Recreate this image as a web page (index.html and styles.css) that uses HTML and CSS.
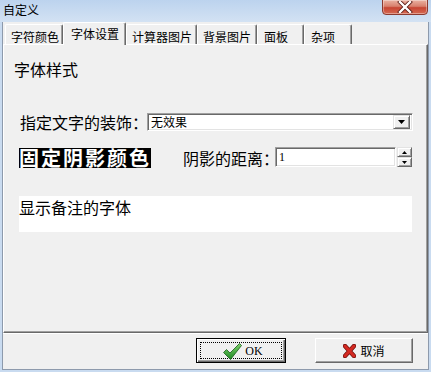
FILE: index.html
```html
<!DOCTYPE html>
<html>
<head>
<meta charset="utf-8">
<link rel="stylesheet" href="styles.css">
</head>
<body>
<div class="window">
  <div class="titlebar">
    <span class="title">自定义</span>
    <div class="close">
      <svg width="16" height="12" viewBox="0 0 16 12">
        <path d="M3 1 L13 11 M13 1 L3 11" stroke="#5a1a14" stroke-width="4" stroke-linecap="square"/>
        <path d="M3 1 L13 11 M13 1 L3 11" stroke="#ffffff" stroke-width="2.4" stroke-linecap="square"/>
      </svg>
    </div>
  </div>
  <div class="client">
    <div class="tabs">
      <div class="tab w1">字符颜色</div>
      <div class="tab active w2">字体设置</div>
      <div class="tab w3">计算器图片</div>
      <div class="tab w4">背景图片</div>
      <div class="tab w5">面板</div>
      <div class="tab w6">杂项</div>
    </div>
    <div class="panel">
      <div class="group-title">字体样式</div>
      <div class="row row1">
        <span class="label deco">指定文字的装饰：</span>
        <div class="select">
          <span class="select-text">无效果</span>
          <span class="drop">
            <svg width="7" height="4" viewBox="0 0 7 4"><path d="M0 0 H7 L3.5 4 Z" fill="#000"/></svg>
          </span>
        </div>
      </div>
      <div class="row row2">
        <span class="shadow-label">固定阴影颜色</span>
        <span class="label dist">阴影的距离：</span>
        <div class="spin">
          <div class="spin-input">1</div>
          <div class="spin-btns">
            <div class="spin-btn"><svg width="5" height="3" viewBox="0 0 5 3"><path d="M0 3 H5 L2.5 0 Z" fill="#000"/></svg></div>
            <div class="spin-btn"><svg width="5" height="3" viewBox="0 0 5 3"><path d="M0 0 H5 L2.5 3 Z" fill="#000"/></svg></div>
          </div>
        </div>
      </div>
      <div class="memo">显示备注的字体</div>
    </div>
    <div class="buttons">
      <div class="btn ok">
        <div class="focus">
          <svg class="icon-check" width="19" height="17" viewBox="0 0 19 17">
            <defs>
              <linearGradient id="g" x1="0" y1="0" x2="0" y2="1">
                <stop offset="0" stop-color="#7ed36a"/>
                <stop offset="1" stop-color="#1f8a25"/>
              </linearGradient>
            </defs>
            <path d="M0.5 9.5 L3.5 6.5 L7 10 L16.5 0.5 L18.5 2.5 L7.5 16.5 Z" fill="url(#g)" stroke="#1a5e1c" stroke-width="0.8"/>
          </svg>
          <span class="ok-text">OK</span>
        </div>
      </div>
      <div class="btn cancel">
        <svg class="icon-x" width="13" height="14" viewBox="0 0 13 14">
          <path d="M2 2 L11 12 M11 2 L2 12" stroke="#6e0f0c" stroke-width="4.4" stroke-linecap="round"/>
          <path d="M2 2 L11 12 M11 2 L2 12" stroke="#d42a22" stroke-width="3" stroke-linecap="round"/>
        </svg>
        <span class="cancel-text">取消</span>
      </div>
    </div>
  </div>
</div>
</body>
</html>
```

FILE: styles.css
```css
* { box-sizing: border-box; }
html, body { margin: 0; padding: 0; }
body {
  width: 431px;
  height: 372px;
  overflow: hidden;
  font-family: "Noto Sans CJK SC", "Noto Sans", sans-serif;
  color: #000;
}
.window {
  width: 431px;
  height: 372px;
  background: #c9dbf0;
  display: flex;
  flex-direction: column;
}
.titlebar {
  height: 22px;
  flex: none;
  background: linear-gradient(#bcd3ee, #d3e2f3);
  display: flex;
  justify-content: space-between;
  align-items: flex-start;
  padding-left: 3px;
  padding-right: 3px;
}
.title {
  font-size: 12px;
  line-height: 14px;
  margin-top: 3px;
  color: #000;
}
.close {
  width: 46px;
  height: 16px;
  margin-top: -1px;
  border: 1px solid #8b3a30;
  border-radius: 0 0 4px 4px;
  background: linear-gradient(#eab2a2 0%, #d8806d 45%, #c74533 55%, #d56a52 100%);
  display: flex;
  align-items: center;
  justify-content: center;
  box-shadow: inset 0 0 0 1px rgba(255,255,255,0.35);
}
.client {
  flex: 1;
  margin: 0 2px 2px 2px;
  border: 1px solid #8d9aac;
  border-top: none;
  background: #f0f0f0;
  display: flex;
  flex-direction: column;
}
.tabs {
  height: 22px;
  flex: none;
  display: flex;
  align-items: flex-end;
  padding-left: 2px;
  position: relative;
  z-index: 2;
}
.tab {
  height: 20px;
  background: #f0f0f0;
  border-top: 1px solid #fff;
  border-left: 1px solid #fff;
  border-right: 1px solid #696969;
  box-shadow: inset -1px 0 0 #a0a0a0;
  border-radius: 2px 2px 0 0;
  font-size: 12px;
  line-height: 14px;
  padding-top: 5px;
  padding-left: 5px;
  white-space: nowrap;
}
.tab.active {
  height: 23px;
  margin-bottom: -1px;
  padding-top: 4px;
  padding-left: 7px;
}
.w1 { width: 58px; }
.w2 { width: 63px; }
.w3 { width: 71px; }
.w4 { width: 60px; }
.w5 { width: 47px; padding-left: 6px; }
.w6 { width: 48px; padding-left: 6px; }

.panel {
  height: 289px;
  flex: none;
  border-top: 1px solid #fff;
  border-left: 1px solid #fff;
  border-right: 1px solid #696969;
  border-bottom: 1px solid #696969;
  box-shadow: inset -1px -1px 0 #a0a0a0;
  display: flex;
  flex-direction: column;
  position: relative;
  z-index: 1;
}
.group-title {
  font-size: 16px;
  line-height: 18px;
  margin-top: 15px;
  margin-left: 10px;
}
.row {
  display: flex;
  align-items: center;
}
.row1 {
  margin-top: 35px;
  height: 18px;
}
.label {
  font-size: 16px;
  line-height: 18px;
  white-space: nowrap;
}
.deco {
  margin-left: 16px;
  width: 127px;
}
.select {
  width: 266px;
  height: 18px;
  background: #fff;
  border-top: 1px solid #a0a0a0;
  border-left: 1px solid #a0a0a0;
  border-right: 1px solid #fff;
  border-bottom: 1px solid #fff;
  box-shadow: inset 1px 1px 0 #696969, inset -1px -1px 0 #e3e3e3;
  display: flex;
  align-items: center;
  justify-content: space-between;
  padding: 2px 2px 2px 3px;
}
.select-text {
  font-size: 12px;
  line-height: 14px;
}
.drop {
  width: 17px;
  height: 14px;
  background: #f0f0f0;
  border-top: 1px solid #e3e3e3;
  border-left: 1px solid #e3e3e3;
  border-right: 1px solid #696969;
  border-bottom: 1px solid #696969;
  box-shadow: inset 1px 1px 0 #fff, inset -1px -1px 0 #a0a0a0;
  display: flex;
  align-items: center;
  justify-content: center;
}
.row2 {
  margin-top: 16px;
  height: 21px;
}
.shadow-label {
  margin-left: 15px;
  background: #000;
  color: #fff;
  font-weight: bold;
  font-size: 20px;
  line-height: 20px;
  height: 20px;
  letter-spacing: 2px;
  white-space: nowrap;
}
.dist {
  margin-left: 32px;
  width: 92px;
}
.spin {
  display: flex;
  align-items: flex-start;
  height: 21px;
}
.spin-input {
  width: 121px;
  height: 20px;
  background: #fff;
  border-top: 1px solid #a0a0a0;
  border-left: 1px solid #a0a0a0;
  border-right: 1px solid #fff;
  border-bottom: 1px solid #fff;
  box-shadow: inset 1px 1px 0 #696969, inset -1px -1px 0 #e3e3e3;
  font-family: "Liberation Serif", serif;
  font-size: 12px;
  line-height: 16px;
  padding-left: 3px;
  padding-top: 1px;
}
.spin-btns {
  display: flex;
  flex-direction: column;
  margin-left: 1px;
}
.spin-btn {
  width: 15px;
  height: 10px;
  background: #f0f0f0;
  border-top: 1px solid #e3e3e3;
  border-left: 1px solid #e3e3e3;
  border-right: 1px solid #696969;
  border-bottom: 1px solid #696969;
  box-shadow: inset 1px 1px 0 #fff, inset -1px -1px 0 #a0a0a0;
  display: flex;
  align-items: center;
  justify-content: center;
}
.memo {
  margin-top: 28px;
  margin-left: 15px;
  width: 393px;
  height: 36px;
  background: #fff;
  font-size: 16px;
  line-height: 18px;
  padding-top: 2px;
}
.buttons {
  display: flex;
  padding-left: 193px;
  padding-top: 4px;
  border-top: 1px solid #fff;
}
.btn {
  height: 25px;
  background: #f0f0f0;
  display: flex;
  align-items: center;
  justify-content: center;
}
.ok {
  width: 90px;
  border: 1px solid #000;
  box-shadow: inset 1px 1px 0 #fff, inset -1px -1px 0 #696969, inset -2px -2px 0 #a0a0a0;
  padding: 3px;
}
.focus {
  width: 100%;
  height: 100%;
  border: 1px dotted #000;
  display: flex;
  align-items: center;
  justify-content: center;
  padding-left: 4px;
}
.icon-check { margin-right: 3px; margin-top: 1px; }
.ok-text {
  font-family: "Liberation Serif", serif;
  font-size: 12px;
  line-height: 14px;
}
.cancel {
  width: 98px;
  margin-left: 29px;
  border-top: 1px solid #fff;
  border-left: 1px solid #fff;
  border-right: 1px solid #696969;
  border-bottom: 1px solid #696969;
  box-shadow: inset -1px -1px 0 #a0a0a0;
}
.icon-x { margin-right: 4px; }
.cancel-text {
  font-size: 12px;
  line-height: 14px;
}
```
